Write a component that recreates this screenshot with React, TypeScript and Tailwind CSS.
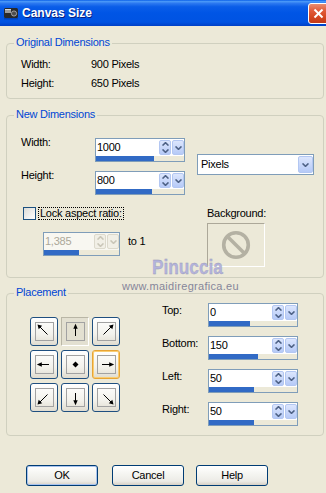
import React from "react";

type Dir = "nw" | "n" | "ne" | "w" | "c" | "e" | "sw" | "s" | "se";

function Chev({ up, color }: { up?: boolean; color: string }) {
  return (
    <svg width="7" height="4" viewBox="0 0 7 4" className="block">
      <path
        d={up ? "M0.5 3.6 L3.5 0.6 L6.5 3.6" : "M0.5 0.4 L3.5 3.4 L6.5 0.4"}
        fill="none"
        stroke={color}
        strokeWidth="1.5"
      />
    </svg>
  );
}

function Spin({
  value,
  bar,
  w = "w-[90px]",
  disabled = false,
}: {
  value: string;
  bar: string;
  w?: string;
  disabled?: boolean;
}) {
  const btn = disabled
    ? "bg-[#F1EFE6] border-[#DCD9CC]"
    : "bg-[linear-gradient(180deg,#DCE6FD,#B6CAF7)] border-[#B3C7F2]";
  const a = disabled ? "#C9C6B8" : "#4D6185";
  return (
    <div
      className={`${w} h-[24px] border border-[#7F9DB9] flex flex-col ${
        disabled ? "bg-[#F8F7F1]" : "bg-white"
      }`}
    >
      <div className="h-[17px] flex">
        <div
          className={`flex-1 pl-[1px] leading-[17px] ${
            disabled ? "text-[#ACA899]" : "text-black"
          }`}
        >
          {value}
        </div>
        <div
          className={`w-[12px] my-[1px] rounded-[2px] border flex flex-col items-center justify-center gap-[3px] ${btn}`}
        >
          <Chev up color={a} />
          <Chev color={a} />
        </div>
        <div
          className={`w-[12px] ml-[1px] my-[1px] rounded-[2px] border flex items-center justify-center ${btn}`}
        >
          <Chev color={a} />
        </div>
      </div>
      <div className="h-[5px] bg-[#ECE9D8] flex">
        <div className={`h-full bg-[#316AC5] ${bar}`} />
      </div>
    </div>
  );
}

function Group({
  title,
  className,
  children,
}: {
  title: string;
  className: string;
  children?: React.ReactNode;
}) {
  return (
    <div className={`w-[318px] border border-[#D0D0BF] rounded-[4px] ${className}`}>
      <div className="-mt-[8px] ml-[7px] px-[2px] w-fit bg-[#ECE9D8] text-[#0046D5] leading-[13px]">
        {title}
      </div>
      {children}
    </div>
  );
}

function PArrow({ d }: { d: Dir }) {
  const rot: Record<Dir, number> = {
    n: 0,
    e: 90,
    s: 180,
    w: 270,
    nw: 0,
    ne: 90,
    se: 180,
    sw: 270,
    c: 0,
  };
  const diag = d.length === 2;
  return (
    <svg width="17" height="17" viewBox="0 0 17 17" className="block">
      {d === "c" ? (
        <polygon points="8.5,5.5 11.5,8.5 8.5,11.5 5.5,8.5" fill="#000" />
      ) : (
        <g transform={`rotate(${rot[d]} 8.5 8.5)`}>
          {diag ? (
            <>
              <line x1="3" y1="3" x2="11.5" y2="11.5" stroke="#000" strokeWidth="1" />
              <polygon points="1.5,1.5 6.2,2.7 2.7,6.2" fill="#000" />
            </>
          ) : (
            <>
              <line x1="8.5" y1="2" x2="8.5" y2="13" stroke="#000" strokeWidth="1" />
              <polygon points="8.5,0.8 6.3,5.8 10.7,5.8" fill="#000" />
            </>
          )}
        </g>
      )}
    </svg>
  );
}

function PBtn({ d, state }: { d: Dir; state?: "pressed" | "hot" }) {
  const style =
    state === "pressed"
      ? "border border-[#B9B6A6] border-b-white border-r-white bg-[#E3E0D1]"
      : state === "hot"
      ? "rounded-[3px] border border-[#E8A435] shadow-[inset_0_0_0_1px_#F9CD72] bg-[linear-gradient(180deg,#FFFFFF,#F3F2EC_60%,#E0DCD0)]"
      : "rounded-[3px] border border-[#1F4F80] bg-[linear-gradient(180deg,#FFFFFF,#F3F2EC_60%,#E0DCD0)]";
  return (
    <div className={`w-[28px] h-[29px] flex items-center justify-center ${style}`}>
      <div className="w-[19px] h-[19px] border border-[#A2A2A2] flex items-center justify-center">
        <PArrow d={d} />
      </div>
    </div>
  );
}

function XPButton({ label, def }: { label: string; def?: boolean }) {
  return (
    <div
      className={`w-[72px] h-[21px] rounded-[3px] border border-[#003C74] bg-[linear-gradient(180deg,#FFFFFF_0%,#F4F4F0_45%,#ECEBE6_80%,#D6D0C5_100%)] flex items-center justify-center leading-[13px] ${
        def ? "shadow-[inset_0_0_0_1px_#A8C3EE]" : ""
      }`}
    >
      {label}
    </div>
  );
}

function TitleIcon() {
  return (
    <svg width="16" height="16" viewBox="0 0 16 16" className="block">
      <rect x="1" y="3" width="14" height="10" rx="1.5" fill="#2A2A2A" />
      <rect x="2" y="4" width="6" height="4" fill="#9C9C9C" />
      <rect x="2" y="4" width="6" height="1" fill="#D6D6D6" />
      <circle cx="11" cy="8.5" r="2.6" fill="#4E4E4E" stroke="#B8B8B8" strokeWidth="0.8" />
      <rect x="1" y="13" width="14" height="1.5" fill="#00308F" opacity="0.5" />
    </svg>
  );
}

function NoSign() {
  return (
    <svg width="30" height="30" viewBox="0 0 30 30" className="block">
      <circle cx="15" cy="15" r="12.3" fill="none" stroke="#B4B1A3" strokeWidth="3.6" />
      <line x1="6.4" y1="6.4" x2="23.6" y2="23.6" stroke="#B4B1A3" strokeWidth="3.6" />
    </svg>
  );
}

export default function App() {
  return (
    <div className="relative w-[326px] h-[493px] overflow-hidden bg-[#ECE9D8] font-['Liberation_Sans',Arial,sans-serif] text-[11px] tracking-[-0.25px] text-black">
      {/* Title bar */}
      <div className="h-[26px] flex items-center bg-[linear-gradient(180deg,#0A5FE8_0%,#4A98F8_6%,#2B78F0_13%,#0A5DE8_26%,#0055E5_50%,#0053E2_85%,#0040C6_100%)]">
        <div className="ml-[3px]">
          <TitleIcon />
        </div>
        <div className="ml-[3px] text-white font-bold text-[12px] tracking-normal [text-shadow:1px_1px_0_#0A1E80]">
          Canvas Size
        </div>
        <div className="ml-auto -mr-[3px] w-[21px] h-[21px] rounded-[3px] border border-white bg-[linear-gradient(180deg,#EA8D71_0%,#E15B3A_35%,#D4461F_70%,#C23A18_100%)] flex items-center justify-center">
          <svg width="13" height="13" viewBox="0 0 13 13" className="block">
            <line x1="2.5" y1="2.5" x2="10.5" y2="10.5" stroke="#fff" strokeWidth="2" />
            <line x1="10.5" y1="2.5" x2="2.5" y2="10.5" stroke="#fff" strokeWidth="2" />
          </svg>
        </div>
      </div>

      <div className="pl-[6px]">
        {/* Original Dimensions */}
        <Group title="Original Dimensions" className="mt-[17px] h-[56px]">
          <div className="mt-[6px] pl-[14px]">
            <div className="flex h-[19px] leading-[19px]">
              <div className="w-[70px]">Width:</div>
              <div>900 Pixels</div>
            </div>
            <div className="flex h-[19px] leading-[19px]">
              <div className="w-[70px]">Height:</div>
              <div>650 Pixels</div>
            </div>
          </div>
        </Group>

        {/* New Dimensions */}
        <Group title="New Dimensions" className="mt-[16px] h-[163px]">
          <div className="mt-[17px] pl-[14px] flex items-start">
            <div className="flex flex-col gap-[9px]">
              <div className="flex">
                <div className="w-[74px] -mt-[2px] leading-[13px]">Width:</div>
                <Spin value="1000" bar="w-[58px]" />
              </div>
              <div className="flex">
                <div className="w-[74px] -mt-[2px] leading-[13px]">Height:</div>
                <Spin value="800" bar="w-[56px]" />
              </div>
            </div>
            <div className="ml-[12px] mt-[16px] w-[117px] h-[21px] border border-[#7F9DB9] bg-white flex">
              <div className="flex-1 pl-[3px] leading-[19px]">Pixels</div>
              <div className="w-[15px] my-[1px] rounded-[2px] border border-[#B3C7F2] bg-[linear-gradient(180deg,#DCE6FD,#B6CAF7)] flex items-center justify-center">
                <Chev color="#4D6185" />
              </div>
            </div>
          </div>

          <div className="mt-[12px] pl-[14px] flex">
            <div className="w-[186px]">
              <div className="flex items-center h-[13px] ml-[2px]">
                <div className="w-[13px] h-[13px] border border-[#1C5180] bg-[linear-gradient(135deg,#DCDCD7,#FFFFFF)]" />
                <div className="ml-[2px] border border-dotted border-black px-[1px] leading-[11px]">
                  Lock aspect ratio:
                </div>
              </div>
              <div className="mt-[12px] ml-[22px] flex">
                <Spin value="1,385" bar="w-[35px]" w="w-[77px]" disabled />
                <div className="ml-[8px] mt-[3px] leading-[13px]">to 1</div>
              </div>
            </div>
            <div>
              <div className="leading-[13px]">Background:</div>
              <div className="mt-[3px] w-[58px] h-[44px] border border-[#ACA899] border-b-white border-r-white flex items-center justify-center">
                <NoSign />
              </div>
            </div>
          </div>
        </Group>

        {/* Placement */}
        <Group title="Placement" className="mt-[15px] h-[143px]">
          <div className="pl-[23px] flex items-start">
            <div className="mt-[18px] grid grid-cols-[28px_28px_28px] gap-x-[3px] gap-y-[4px]">
              <PBtn d="nw" />
              <PBtn d="n" state="pressed" />
              <PBtn d="ne" />
              <PBtn d="w" />
              <PBtn d="c" />
              <PBtn d="e" state="hot" />
              <PBtn d="sw" />
              <PBtn d="s" />
              <PBtn d="se" />
            </div>
            <div className="ml-[42px] mt-[4px] flex flex-col gap-[9px]">
              <div className="flex">
                <div className="w-[46px] mt-[1px] leading-[13px]">Top:</div>
                <Spin value="0" bar="w-[41px]" />
              </div>
              <div className="flex">
                <div className="w-[46px] mt-[1px] leading-[13px]">Bottom:</div>
                <Spin value="150" bar="w-[49px]" />
              </div>
              <div className="flex">
                <div className="w-[46px] mt-[1px] leading-[13px]">Left:</div>
                <Spin value="50" bar="w-[45px]" />
              </div>
              <div className="flex">
                <div className="w-[46px] mt-[1px] leading-[13px]">Right:</div>
                <Spin value="50" bar="w-[45px]" />
              </div>
            </div>
          </div>
        </Group>

        {/* Buttons */}
        <div className="mt-[29px] ml-[20px] flex">
          <XPButton label="OK" def />
          <div className="ml-[14px]">
            <XPButton label="Cancel" />
          </div>
          <div className="ml-[12px]">
            <XPButton label="Help" />
          </div>
        </div>
      </div>

      {/* Watermark overlay */}
      <div className="absolute left-[152px] top-[256px] text-[21px] leading-[21px] font-bold tracking-normal text-[#B3B3DC] origin-left scale-x-[0.82] [-webkit-text-stroke:0.3px_#9A9AB4]">
        Pinuccia
      </div>
      <div className="absolute left-[122px] top-[280px] text-[11px] leading-[13px] tracking-[0.3px] text-[#86869A]">
        www.maidiregrafica.eu
      </div>
    </div>
  );
}
